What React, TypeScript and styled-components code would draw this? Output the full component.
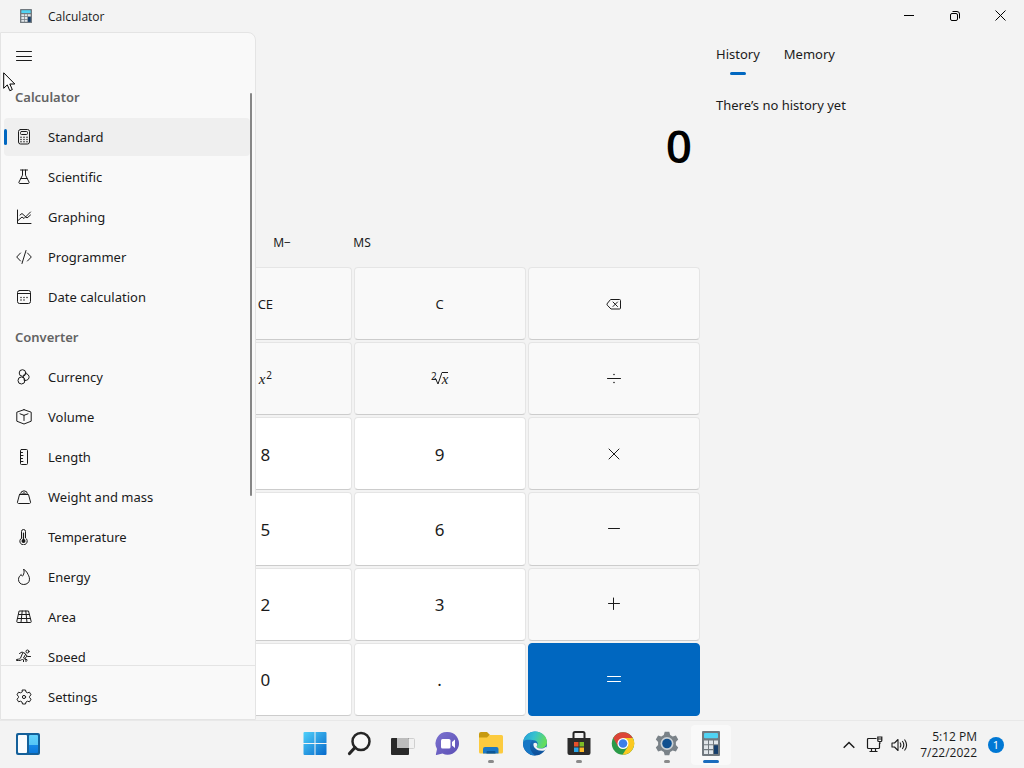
import React from "react";
import styled, { createGlobalStyle } from "styled-components";

const GlobalStyle = createGlobalStyle`
  * { box-sizing: border-box; }
  body { margin: 0; }
  body, button {
    font-family: "Noto Sans", "Open Sans", sans-serif;
    font-size: 13px;
    line-height: 20px;
    color: #1b1b1b;
  }
  button { border: 0; padding: 0; margin: 0; background: none; }
`;

const Desktop = styled.div`
  position: relative;
  display: flex;
  flex-direction: column;
  min-height: 100vh;
  background: #f3f3f3;
`;

/* ---------- Window ---------- */

const AppWindow = styled.section`
  flex: 1;
  display: flex;
  flex-direction: column;
`;

const TitleBar = styled.header`
  display: flex;
  align-items: center;
  height: 32px;
  padding-left: 20px;
`;

const WindowTitle = styled.h1`
  flex: 1;
  margin: 2px 0 0 16px;
  font-family: "Open Sans", "Noto Sans", sans-serif;
  font-size: 12px;
  font-weight: 400;
  line-height: 16px;
`;

const CaptionButton = styled.button`
  display: grid;
  place-items: center;
  width: 46px;
  height: 32px;
`;

const WindowBody = styled.div`
  position: relative;
  flex: 1;
  display: flex;
`;

/* ---------- Navigation pane ---------- */

const NavPane = styled.nav`
  position: absolute;
  inset: 0 auto 0 0;
  z-index: 1;
  display: flex;
  flex-direction: column;
  width: 256px;
  border: 1px solid #e4e4e4;
  border-radius: 0 8px 0 0;
  background: #f9f9f9;
`;

const MenuButton = styled.button`
  display: grid;
  place-items: center;
  width: 40px;
  height: 36px;
  margin: 5px 3px 3px;
`;

const NavList = styled.div`
  flex: 1 1 0;
  display: flex;
  flex-direction: column;
  min-height: 0;
  overflow: hidden;
`;

const NavHeading = styled.h2`
  flex: none;
  margin: 0;
  padding: 10px 14px;
  font-size: 13px;
  font-weight: 600;
  line-height: 20px;
  color: #636363;
`;

const NavItem = styled.button<{ $selected?: boolean }>`
  flex: none;
  display: flex;
  align-items: center;
  width: 246px;
  height: 38px;
  margin: 1px 3px;
  border-radius: 4px;
  text-align: left;
  background: ${(p) => (p.$selected ? "#efefef" : "transparent")};

  &::before {
    content: "";
    width: 3px;
    height: 16px;
    margin-right: 9px;
    border-radius: 2px;
    background: ${(p) => (p.$selected ? "#0067c0" : "transparent")};
  }

  svg { margin-right: 16px; flex: none; }
`;

const NavFooter = styled.div`
  margin-top: 3px;
  padding: 11px 0 2px;
  border-top: 1px solid #e4e4e4;
`;

const ScrollThumb = styled.div`
  position: absolute;
  top: 60px;
  right: 3px;
  width: 2px;
  height: 403px;
  border-radius: 1px;
  background: #868686;
`;

/* ---------- Calculator ---------- */

const Calculator = styled.main`
  flex: 1;
  display: flex;
  flex-direction: column;
  padding: 0 4px 4px 2px;
`;

const Result = styled.output`
  padding: 81px 8px 43px;
  font-family: "Open Sans", "Noto Sans", sans-serif;
  font-size: 46px;
  font-weight: 600;
  line-height: 64px;
  text-align: right;
  color: #000;
`;

const MemoryRow = styled.div`
  display: flex;
  height: 47px;
`;

/* Controls that sit under the open navigation pane can't be reached while it is open. */
const MemoryButton = styled.button`
  width: 80px;
  height: 45px;
  font-size: 12px;

  &:nth-child(-n + 3) { visibility: hidden; }
`;

const Keypad = styled.div`
  flex: 1;
  display: grid;
  grid-template-columns: repeat(4, 1fr);
  grid-auto-rows: 1fr;
  gap: 2px;
  padding-left: 3px;
`;

type KeyKind = "digit" | "operator" | "equals";

const keyBackground: Record<KeyKind, string> = {
  digit: "#ffffff",
  operator: "#f9f9f9",
  equals: "#0067c0",
};

const Key = styled.button<{ $kind: KeyKind }>`
  display: flex;
  align-items: center;
  justify-content: center;
  min-height: 48px;
  padding-top: ${(p) => (p.$kind === "digit" ? 2 : 0)}px;
  border: 1px solid ${(p) => (p.$kind === "equals" ? "#0067c0" : "#e5e5e5")};
  border-bottom-color: ${(p) => (p.$kind === "equals" ? "#0067c0" : "#cccccc")};
  border-radius: 4px;
  font-size: ${(p) => (p.$kind === "digit" ? 17 : 13)}px;
  color: ${(p) => (p.$kind === "equals" ? "#ffffff" : "#1b1b1b")};
  background: ${(p) => keyBackground[p.$kind]};

  &:nth-child(4n + 1) { visibility: hidden; }
`;

const MathX = styled.i<{ $bar?: boolean }>`
  font-family: "Liberation Serif", serif;
  font-size: 15px;
  line-height: 12px;
  border-top: ${(p) => (p.$bar ? "1px solid #1b1b1b" : "0")};
`;

const Exponent = styled.span<{ $root?: boolean }>`
  margin: ${(p) => (p.$root ? "0 -3px 6px 0" : "0 0 8px 1px")};
  font-size: 10px;
  line-height: 10px;
`;

/* ---------- History panel ---------- */

const SidePanel = styled.aside`
  width: 320px;
  padding: 12px;
`;

const Tabs = styled.div`
  display: flex;
  gap: 24px;
`;

const Tab = styled.button<{ $active?: boolean }>`
  display: flex;
  flex-direction: column;
  align-items: center;

  &::after {
    content: "";
    width: 16px;
    height: 3px;
    margin-top: 8px;
    border-radius: 2px;
    background: ${(p) => (p.$active ? "#0067c0" : "transparent")};
  }
`;

const EmptyHistory = styled.p`
  margin: 20px 0 0;
`;

/* ---------- Taskbar ---------- */

const Taskbar = styled.footer`
  display: grid;
  grid-template-columns: 1fr auto 1fr;
  align-items: center;
  height: 48px;
  border-top: 1px solid #e8e8e8;
  background: #f3f3f3;
`;

const PinnedApps = styled.div`
  display: flex;
  gap: 4px;
  padding-left: 1px;
`;

const TaskButton = styled.button<{ $state?: "running" | "active" }>`
  display: flex;
  flex-direction: column;
  align-items: center;
  width: 40px;
  height: 40px;
  padding-top: 6px;
  border-radius: 4px;
  background: ${(p) => (p.$state === "active" ? "#f9f9f9" : "transparent")};

  &::after {
    content: "";
    width: ${(p) => (p.$state === "active" ? 16 : 6)}px;
    height: 3px;
    margin-top: 4px;
    border-radius: 2px;
    background: ${(p) =>
      p.$state === "active" ? "#1a6cbd" : p.$state === "running" ? "#8a8a8a" : "transparent"};
  }
`;

const TaskbarStart = styled.div`
  padding-left: 8px;
`;

const Tray = styled.div`
  display: flex;
  align-items: center;
  justify-content: flex-end;
  gap: 7px;
  padding-right: 20px;
`;

const TrayButton = styled.button`
  display: grid;
  place-items: center;
  width: 18px;
  height: 40px;
`;

const Clock = styled.time`
  margin-left: 5px;
  font-family: "Open Sans", "Noto Sans", sans-serif;
  font-size: 12px;
  line-height: 16px;
  text-align: right;
`;

const NotificationCount = styled.button`
  width: 16px;
  height: 16px;
  margin-left: 4px;
  border-radius: 8px;
  font-size: 11px;
  line-height: 16px;
  color: #fff;
  background: #0078d4;
`;

const Pointer = styled.svg`
  position: absolute;
  left: 3px;
  top: 72px;
  z-index: 2;
`;

/* ---------- Icons ---------- */

const Line = ({ children, size = 16 }: { children: React.ReactNode; size?: number }) => (
  <svg
    width={size}
    height={size}
    viewBox="0 0 16 16"
    fill="none"
    stroke="currentColor"
    strokeWidth="1"
    strokeLinecap="round"
    strokeLinejoin="round"
    aria-hidden="true"
  >
    {children}
  </svg>
);

const navIcons: Record<string, React.ReactNode> = {
  Standard: (
    <>
      <rect x="2.5" y=".5" width="11" height="14.5" rx="2" />
      <rect x="4.5" y="2.5" width="7" height="3" rx="1" />
      <path strokeWidth="1.5" d="M5 8.3h0M8 8.3h0M11 8.3h0M5 10.5h0M8 10.5h0M11 10.5h0M5 12.7h0M8 12.7h0M11 12.7h0" />
    </>
  ),
  Scientific: (
    <path d="M4.500 1h7M6.500 1v5.200L3 13c-.4.800 0 1.500.9 1.500h8.200c.9 0 1.300-.7.900-1.500L9.500 6.200V1M4.800 9.500h6.400" />
  ),
  Graphing: (
    <path d="M1.500 1v13.500H15M1.500 12L6 8l2 1.500L14.500 3M4 6l2-1.500L11 9l3.500-3" />
  ),
  Programmer: <path d="M4.500 4L.7 8l3.800 4M11.500 4l3.800 4-3.800 4M10 1.500L6 14.500" />,
  "Date calculation": (
    <>
      <rect x="1.500" y="1.500" width="13" height="13" rx="2" />
      <path d="M1.500 4.500h13" />
      <path strokeWidth="1.500" d="M5 8.500h0M8 8.500h0M11 8.500h0M5 11h0M8 11h0" />
    </>
  ),
  Currency: (
    <>
      <circle cx="6.500" cy="4" r="3.300" />
      <path d="M9.500 4.500a3.500 3.500 0 1 1-1.700 6.500M9.500 4.500A3.500 3.500 0 0 0 7.600 9" />
      <circle cx="5.500" cy="11.500" r="3.500" />
    </>
  ),
  Volume: <path d="M8 .7L15.200 3.200v9L8 15 .8 12.200v-9L8 .7zM4 4.800l4 1.500 4-1.500M8 6.300V11.500" />,
  Length: (
    <>
      <rect x="4.500" y=".5" width="7" height="15" rx="1" />
      <path d="M4.500 3.500h2M4.500 6.500h2.500M4.500 9.500h2M4.500 12.500h2.500" />
    </>
  ),
  "Weight and mass": (
    <>
      <path d="M3.500 5.500h9l2 7.500c.2.800-.2 1.500-1 1.500h-11c-.8 0-1.200-.7-1-1.500l2-7.500z" />
      <path d="M4.500 5.300a3.500 3.500 0 0 1 7 0M6.500 5.300a1.500 1.500 0 0 1 3 0" />
    </>
  ),
  Temperature: (
    <>
      <path d="M5.500 9V2.500a2 2 0 0 1 4 0V9a3.700 3.700 0 1 1-4 0z" />
      <path strokeWidth="1.200" d="M7.500 4v7" />
      <circle cx="7.500" cy="12" r="2" fill="currentColor" stroke="none" />
    </>
  ),
  Energy: (
    <path d="M7.800.5C8.500 3 8 4.500 7 6.500 6.500 7.500 5.500 7.200 5.200 5.500 3.500 7 2.500 8.500 2.500 10.500c0 3 2.300 5 5.200 5 3.300 0 5.800-2 5.800-5.300 0-2.700-1.300-4.200-2.200-6.200C10.300 2.500 9.500 1.200 7.800.5z" />
  ),
  Area: (
    <path d="M3.500 2h9l2.700 10.500q.1 1-.7 1h-13q-.8 0-.7-1zM2.700 5.500h10.600M1.700 9.500h12.600M6.200 2L5 13.500M9.800 2l1.200 11.500" />
  ),
  Speed: (
    <>
      <circle cx="11.500" cy="2.500" r="1.500" />
      <path d="M9 4.500L6 3 3.500 4.500M9 4.500c1 .5 1.500 3 3 3h2.500M9.500 5.500L7.500 9l2.500 2v4M6.500 4.500L5 8c-.5 2-1.500 2-4.500 2.500v1c3 0 5 .2 6-1.500l1 1v3M10.500 7.500L9 9.500l2.200 1.500" />
    </>
  ),
  Settings: (
    <>
      <path d="M6.500 1h3l.5 2 1.500.8 2-.6L15 5.800 13.600 7.300v1.400L15 10.200l-1.500 2.600-2-.6L10 13l-.5 2h-3L6 13l-1.500-.8-2 .6L1 10.200l1.400-1.500V7.300L1 5.800l1.500-2.600 2 .6L6 3z" />
      <circle cx="8" cy="8" r="1.600" />
    </>
  ),
};

const CalculatorLogo = ({ width, height }: { width: number; height: number }) => (
  <svg width={width} height={height} viewBox="0 0 18 24" preserveAspectRatio="none" aria-hidden="true">
    <rect width="18" height="24" rx="1" fill="#71797f" />
    <rect x="2" y="2" width="14" height="5" rx="1" fill="#50d3f3" />
    <path
      fill="#e1e6ea"
      d="M2 9h4v3.600H2zM7 9h4v3.600H7zM12 9h4v3.600h-4zM2 13.700h4v3.600H2zM7 13.700h4v3.600H7zM2 18.400h4V22H2zM7 18.400h4V22H7z"
    />
    <path fill="#153e6c" d="M12 13.700h4V22h-4z" />
  </svg>
);

const App24 = ({ children }: { children: React.ReactNode }) => (
  <svg width="24" height="25" viewBox="0 0 24 25" aria-hidden="true">
    {children}
  </svg>
);

const logos: Record<string, React.ReactNode> = {
  Widgets: (
    <App24>
      <defs>
        <linearGradient id="wg" x2="0" y2="1">
          <stop offset="0" stopColor="#62d2fd" />
          <stop offset=".55" stopColor="#55c5f5" />
          <stop offset=".56" stopColor="#1689e8" />
          <stop offset="1" stopColor="#0c79dc" />
        </linearGradient>
      </defs>
      <rect y="2" width="24" height="22" rx="2" fill="#14609a" />
      <rect x="2" y="4" width="9" height="18" rx="1" fill="#fafcfe" />
      <rect x="13" y="4" width="9" height="18" rx="1" fill="url(#wg)" />
    </App24>
  ),
  Start: (
    <App24>
      <defs>
        <linearGradient id="st" x2="1" y2="1">
          <stop offset="0" stopColor="#4fd0fa" />
          <stop offset="1" stopColor="#0669cb" />
        </linearGradient>
      </defs>
      <path
        fill="url(#st)"
        d="M1.500 1H11.500V12H.5V2q0-1 1-1zM12.500 1H22.500q1 0 1 1V12H12.500zM.5 13H11.500V24H1.500q-1 0-1-1zM12.500 13H23.500V23q0 1-1 1H12.500z"
      />
    </App24>
  ),
  Search: (
    <App24>
      <circle cx="14" cy="10.500" r="8.500" fill="#f8f8f8" stroke="#262626" strokeWidth="2.500" />
      <path d="M8 16.500L2.500 22.500" stroke="#262626" strokeWidth="3.200" strokeLinecap="round" />
    </App24>
  ),
  "Task view": (
    <App24>
      <rect x="8.500" y="7.500" width="15" height="10" rx="1" fill="#f1f1f1" stroke="#cfcfcf" />
      <rect x="0" y="7" width="18" height="17" rx="1" fill="#292929" />
      <path d="M6 7h11q1 0 1 1v9H6z" fill="#bcbcbc" />
    </App24>
  ),
  Chat: (
    <App24>
      <defs>
        <linearGradient id="ch" x2="1" y2="1">
          <stop offset="0" stopColor="#7b72cf" />
          <stop offset="1" stopColor="#5c4fb5" />
        </linearGradient>
      </defs>
      <path fill="url(#ch)" d="M12.500 1a11.400 11.400 0 1 1-5 21.600L1.500 24q-.8 0-.6-.8L2 18A11.400 11.400 0 0 1 12.500 1z" />
      <rect x="6" y="8" width="9.500" height="9.500" rx="1.500" fill="#fff" />
      <path d="M17 11l3-2.500v8.500L17 14.500z" fill="#fff" />
    </App24>
  ),
  "File Explorer": (
    <App24>
      <path d="M0 3q0-2 2-2h6l2.500 2.500V9H0z" fill="#c79a10" />
      <path d="M0 6.500h8L10.500 4H22.500Q24 4 24 5.500V21q0 1.500-1.500 1.500h-21Q0 22.500 0 21z" fill="#fccb3f" />
      <path d="M4 22.500V18q0-2 2-2h11.500q2 0 2 2v4.500z" fill="#1c78c4" />
      <path d="M7.500 22.500v-1.500q0-1 1-1h7q1 0 1 1v1.500z" fill="#0c5797" />
    </App24>
  ),
  Edge: (
    <App24>
      <defs>
        <linearGradient id="e1" x2="1" y2=".3">
          <stop offset="0" stopColor="#239cd8" />
          <stop offset=".5" stopColor="#35c1cf" />
          <stop offset="1" stopColor="#63dc5d" />
        </linearGradient>
        <linearGradient id="e2" x2="0" y2="1">
          <stop offset="0" stopColor="#1b82cb" />
          <stop offset="1" stopColor="#0d4d97" />
        </linearGradient>
      </defs>
      <circle cx="12" cy="12.500" r="12" fill="url(#e2)" />
      <path fill="#1777c5" d="M9.500 9.500C5.500 12.500 6 21 13 24.400A12 12 0 0 1 0 12.500C1 8 8 7 9.500 9.500z" />
      <path fill="url(#e1)" d="M.1 11A12 12 0 0 1 12 .5c7 0 12 5 12 10.800 0 3.700-3 6.200-6.500 6.200-3 0-4.500-1-3.500-2.500 2-3-.5-6-4.500-6C5 8.500 1.500 8.500.1 11z" />
      <path fill="#f3f3f3" d="M10.500 12.500c1.300-1.500 3.800-.8 3.800 1.300 0 1-1.300 1.700-.3 2.700 1.800 1.500 6 1.500 9.200-.8l.8 1.800-2.200 1.700c-6 2-12.300-2-11.300-6.700z" />
    </App24>
  ),
  "Microsoft Store": (
    <App24>
      <path d="M6.500 8V2.500q0-1.500 1.500-1.500h8q1.500 0 1.500 1.500V8" fill="none" stroke="#252525" strokeWidth="2" />
      <path d="M.5 7h23v15q0 2-2 2h-19q-2 0-2-2z" fill="#2b2b2b" />
      <path d="M7 11h4.500v4.500H7z" fill="#e8512b" />
      <path d="M12.500 11H17v4.500h-4.500z" fill="#7cbb26" />
      <path d="M7 16.500h4.500V21H7z" fill="#29a5e8" />
      <path d="M12.500 16.500H17V21h-4.500z" fill="#fcb827" />
    </App24>
  ),
  Chrome: (
    <App24>
      <circle cx="12" cy="12.500" r="11.200" fill="#2b9b48" />
      <path d="M2.300 6.900A11.200 11.200 0 0 1 21.700 6.900H12L7 15.500z" fill="#dc4437" />
      <path d="M21.700 6.900A11.200 11.200 0 0 1 11.500 23.700L17 15.300 12 6.900z" fill="#fbc921" />
      <circle cx="12" cy="12.500" r="5.500" fill="#fff" />
      <circle cx="12" cy="12.500" r="4.300" fill="#3b7fe9" />
    </App24>
  ),
  Settings: (
    <App24>
      <path
        d="M9.700.8h4.600l.9 3.200 2.500 1.400 3.200-.9 2.300 4-2.300 2.500v3l2.300 2.500-2.300 4-3.200-.9-2.500 1.400-.9 3.200H9.700L8.800 21l-2.500-1.400-3.200.9-2.300-4L3.100 14v-3L.8 8.500l2.300-4 3.200.9L8.800 4z"
        fill="#7a8288"
      />
      <circle cx="12" cy="12.500" r="6.500" fill="#c9d0d5" />
      <circle cx="12" cy="12.500" r="4.800" fill="#10508f" />
    </App24>
  ),
  Calculator: (
    <App24>
      <svg x="3" y="0" width="18" height="25">
        <CalculatorLogo width={18} height={25} />
      </svg>
    </App24>
  ),
};

/* ---------- Content ---------- */

const calculatorModes = ["Standard", "Scientific", "Graphing", "Programmer", "Date calculation"];
const converterModes = [
  "Currency",
  "Volume",
  "Length",
  "Weight and mass",
  "Temperature",
  "Energy",
  "Area",
  "Speed",
];

const keys: { name: string; kind: KeyKind; face: React.ReactNode }[] = [
  { name: "Percent", kind: "operator", face: <Line><circle cx="4" cy="5" r="2" /><circle cx="12" cy="11" r="2" /><path d="M12 3L4 13" /></Line> },
  { name: "Clear entry", kind: "operator", face: "CE" },
  { name: "Clear", kind: "operator", face: "C" },
  {
    name: "Backspace",
    kind: "operator",
    face: <Line><path d="M5 3.500h8.500q1 0 1 1v7.500q0 1-1 1H5L1.300 9.200q-.8-.9 0-1.800zM7 6l4.500 4.500M11.500 6L7 10.500" /></Line>,
  },
  { name: "Reciprocal", kind: "operator", face: <Line><path d="M3 3l1.500-1v5M10 3L6 13M10 9l4 5M14 9l-4 5" /></Line> },
  { name: "Square", kind: "operator", face: <><MathX>x</MathX><Exponent>2</Exponent></> },
  {
    name: "Square root",
    kind: "operator",
    face: (
      <>
        <Exponent $root>2</Exponent>
        <svg width="8" height="13" viewBox="0 0 8 13" fill="none" stroke="#1b1b1b" aria-hidden="true">
          <path d="M0 7.500L1.500 6.500 4 12 8 .5" />
        </svg>
        <MathX $bar>x</MathX>
      </>
    ),
  },
  { name: "Divide", kind: "operator", face: <Line><path d="M1.500 7.500h13" /><path strokeWidth="1.600" d="M8 3.500h0M8 11.500h0" /></Line> },
  { name: "Seven", kind: "digit", face: "7" },
  { name: "Eight", kind: "digit", face: "8" },
  { name: "Nine", kind: "digit", face: "9" },
  { name: "Multiply", kind: "operator", face: <Line><path d="M3 3l10 10M13 3L3 13" /></Line> },
  { name: "Four", kind: "digit", face: "4" },
  { name: "Five", kind: "digit", face: "5" },
  { name: "Six", kind: "digit", face: "6" },
  { name: "Subtract", kind: "operator", face: <Line><path d="M2.500 7.500h11" /></Line> },
  { name: "One", kind: "digit", face: "1" },
  { name: "Two", kind: "digit", face: "2" },
  { name: "Three", kind: "digit", face: "3" },
  { name: "Add", kind: "operator", face: <Line><path d="M2.500 7.500h11M7.500 2v11.500" /></Line> },
  { name: "Negate", kind: "digit", face: <Line><path d="M2 5h6M5 2v6M12 2L4 14M9 12h5" /></Line> },
  { name: "Zero", kind: "digit", face: "0" },
  { name: "Decimal point", kind: "digit", face: "." },
  { name: "Equals", kind: "equals", face: <Line><path d="M1.500 5.500h13M1.500 10.500h13" /></Line> },
];

const pinned: { name: string; state?: "running" | "active" }[] = [
  { name: "Start" },
  { name: "Search" },
  { name: "Task view" },
  { name: "Chat" },
  { name: "File Explorer", state: "running" },
  { name: "Edge" },
  { name: "Microsoft Store", state: "running" },
  { name: "Chrome" },
  { name: "Settings", state: "running" },
  { name: "Calculator", state: "active" },
];

const ModeButton = ({ name, selected }: { name: string; selected?: boolean }) => (
  <NavItem $selected={selected}>
    <Line>{navIcons[name]}</Line>
    {name}
  </NavItem>
);

export default function App() {
  return (
    <Desktop>
      <GlobalStyle />
      <AppWindow>
        <TitleBar>
          <CalculatorLogo width={12} height={14} />
          <WindowTitle>Calculator</WindowTitle>
          <CaptionButton aria-label="Minimize">
            <svg width="10" height="10" stroke="#000" fill="none"><path d="M0 4.500h10" /></svg>
          </CaptionButton>
          <CaptionButton aria-label="Restore">
            <svg width="10" height="10" stroke="#000" fill="none">
              <rect x=".5" y="2.500" width="7" height="7" rx="1.500" />
              <path d="M2.500 .5H7q2.500 0 2.500 2.500v4.500" />
            </svg>
          </CaptionButton>
          <CaptionButton aria-label="Close">
            <svg width="12" height="12" stroke="#000" fill="none"><path d="M.5 .5l10 10M10.500 .5l-10 10" /></svg>
          </CaptionButton>
        </TitleBar>

        <WindowBody>
          <NavPane aria-label="Modes">
            <MenuButton aria-label="Close navigation">
              <Line><path d="M.5 3.500h15M.5 8.500h15M.5 12.500h15" /></Line>
            </MenuButton>
            <NavList>
              <NavHeading>Calculator</NavHeading>
              {calculatorModes.map((name) => (
                <ModeButton key={name} name={name} selected={name === "Standard"} />
              ))}
              <NavHeading>Converter</NavHeading>
              {converterModes.map((name) => (
                <ModeButton key={name} name={name} />
              ))}
            </NavList>
            <NavFooter>
              <ModeButton name="Settings" />
            </NavFooter>
            <ScrollThumb />
          </NavPane>

          <Calculator>
            <Result>0</Result>
            <MemoryRow>
              {["MC", "MR", "M+", "M−", "MS"].map((label) => (
                <MemoryButton key={label}>{label}</MemoryButton>
              ))}
            </MemoryRow>
            <Keypad>
              {keys.map(({ name, kind, face }) => (
                <Key key={name} $kind={kind} aria-label={name}>
                  {face}
                </Key>
              ))}
            </Keypad>
          </Calculator>

          <SidePanel>
            <Tabs role="tablist">
              <Tab role="tab" aria-selected="true" $active>History</Tab>
              <Tab role="tab" aria-selected="false">Memory</Tab>
            </Tabs>
            <EmptyHistory>There’s no history yet</EmptyHistory>
          </SidePanel>
        </WindowBody>
      </AppWindow>

      <Taskbar>
        <TaskbarStart>
          <TaskButton aria-label="Widgets">{logos.Widgets}</TaskButton>
        </TaskbarStart>
        <PinnedApps>
          {pinned.map(({ name, state }) => (
            <TaskButton key={name} aria-label={name} $state={state}>
              {logos[name]}
            </TaskButton>
          ))}
        </PinnedApps>
        <Tray>
          <TrayButton aria-label="Show hidden icons">
            <svg width="12" height="8" fill="none" stroke="#1b1b1b" strokeWidth="1.500"><path d="M.7 6.800L6 1.500l5.300 5.300" /></svg>
          </TrayButton>
          <TrayButton aria-label="Network">
            <svg width="17" height="17" fill="none" stroke="#1b1b1b" strokeWidth="1.200">
              <path d="M10.500 2.500H2.500q-1 0-1 1v8q0 1 1 1h10q1 0 1-1V7M5.500 12.500v3M9.500 12.500v3M3.500 15.500h8" />
              <path d="M11.800 1h4v3.500q0 1-1 1h-2q-1 0-1-1zM11.800 3h4M13.800 5.500V8" />
            </svg>
          </TrayButton>
          <TrayButton aria-label="Volume">
            <svg width="17" height="14" fill="none" stroke="#1b1b1b" strokeWidth="1.100" strokeLinejoin="round">
              <path d="M1 5v4h2.500L7 12.500v-11L3.500 5zM9 4.500q1.700 2.500 0 5M11.300 3q3 4 0 8M13.500 1.500q4.200 5.500 0 11" />
            </svg>
          </TrayButton>
          <Clock dateTime="2022-07-22T17:12">
            5:12 PM
            <br />
            7/22/2022
          </Clock>
          <NotificationCount aria-label="1 new notification">1</NotificationCount>
        </Tray>
      </Taskbar>

      <Pointer width="13" height="20" viewBox="0 0 13 20" aria-hidden="true">
        <path d="M.7 .8v15.500l3.600-3.400 2.500 5.800 2.500-1.100L6.800 12h5z" fill="#fff" stroke="#000" />
      </Pointer>
    </Desktop>
  );
}
